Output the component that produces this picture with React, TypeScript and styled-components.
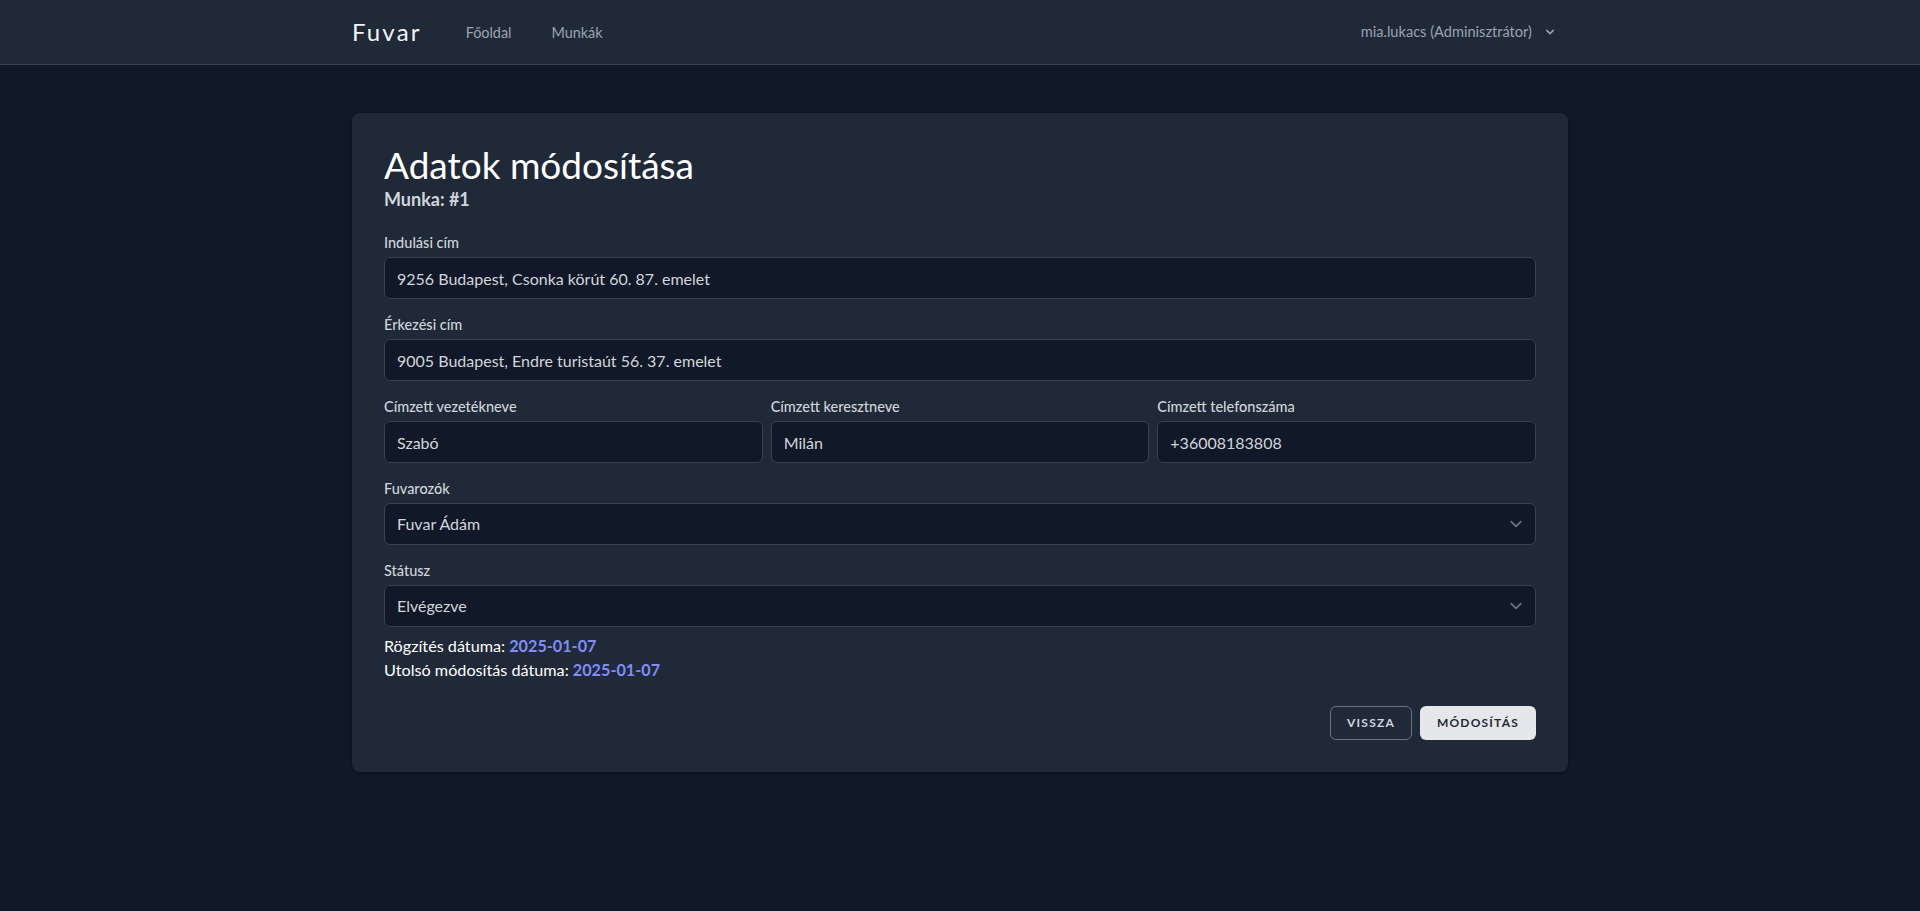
import React from "react";
import styled, { createGlobalStyle } from "styled-components";

const GlobalStyle = createGlobalStyle`
  * { box-sizing: border-box; }
  html, body { margin: 0; padding: 0; }
  body {
    background: #111827;
    font-family: Lato, "Noto Sans", "Liberation Sans", sans-serif;
    color: #d1d5db;
    -webkit-font-smoothing: antialiased;
  }
`;

const Page = styled.div`
  min-height: 100vh;
  background: #111827;
`;

const Nav = styled.nav`
  background: #1f2937;
  border-bottom: 1px solid #374151;
`;

const NavInner = styled.div`
  max-width: 1280px;
  margin: 0 auto;
  padding: 0 32px;
  height: 64px;
  display: flex;
  justify-content: space-between;
  align-items: stretch;
`;

const NavLeft = styled.div`
  display: flex;
  align-items: center;
`;

const Logo = styled.a`
  font-size: 24px;
  letter-spacing: 0.09em;
  color: #f3f4f6;
  text-decoration: none;
  line-height: 32px;
`;

const NavLinks = styled.div`
  display: flex;
  gap: 32px;
  margin-left: 40px;
  height: 100%;
`;

const NavLink = styled.a`
  display: inline-flex;
  align-items: center;
  padding: 4px 4px 0;
  border-bottom: 2px solid transparent;
  font-size: 14.4px;
  line-height: 20px;
  color: #9ca3af;
  text-decoration: none;
`;

const UserButton = styled.button`
  display: inline-flex;
  align-items: center;
  align-self: center;
  padding: 8px 9px 8px 12px;
  border: 1px solid transparent;
  border-radius: 6px;
  background: #1f2937;
  color: #9ca3af;
  font-family: inherit;
  font-size: 14.6px;
  line-height: 16px;
  cursor: pointer;
`;

const ChevronWrap = styled.span`
  display: inline-flex;
  margin-left: 10px;
  width: 16px;
  height: 16px;
`;

const Main = styled.main`
  padding: 48px 0;
`;

const Container = styled.div`
  max-width: 1280px;
  margin: 0 auto;
  padding: 0 32px;
`;

const Card = styled.section`
  background: #1f2937;
  border-radius: 8px;
  padding: 32px;
  box-shadow: 0 1px 3px rgba(0, 0, 0, 0.2), 0 1px 2px rgba(0, 0, 0, 0.15);
`;

const Title = styled.h1`
  margin: 0;
  font-size: 37px;
  line-height: 40px;
  font-weight: 400;
  color: #ffffff;
`;

const Subtitle = styled.h2`
  margin: 0;
  font-size: 18px;
  line-height: 28px;
  font-weight: 700;
  color: #d1d5db;
`;

const Form = styled.form`
  margin-top: 20px;
  display: flex;
  flex-direction: column;
  gap: 16px;
`;

const Row = styled.div<{ $cols: number }>`
  display: grid;
  grid-template-columns: repeat(${(p) => p.$cols}, 1fr);
  gap: 8px;
`;

const Field = styled.div`
  display: flex;
  flex-direction: column;
`;

const Label = styled.label`
  font-size: 14.5px;
  line-height: 20px;
  font-weight: 500;
  color: #d1d5db;
`;

const controlBase = `
  margin-top: 4px;
  width: 100%;
  height: 42px;
  padding: 8px 12px;
  background: #111827;
  border: 1px solid #374151;
  border-radius: 6px;
  color: #d1d5db;
  font-family: inherit;
  font-size: 16px;
  line-height: 24px;
  outline: none;
`;

const Input = styled.input`
  ${controlBase}
`;

const SelectWrap = styled.div`
  position: relative;
  margin-top: 4px;
`;

const Select = styled.select`
  ${controlBase}
  margin-top: 0;
  appearance: none;
  -webkit-appearance: none;
  padding-right: 40px;
`;

const SelectChevron = styled.svg`
  position: absolute;
  right: 8px;
  top: 50%;
  width: 24px;
  height: 24px;
  transform: translateY(-50%);
  pointer-events: none;
`;

const Meta = styled.div`
  margin-top: 7px;
  font-size: 16.2px;
  line-height: 24px;
  color: #ffffff;
`;

const MetaLine = styled.div``;

const DateValue = styled.span`
  color: #818cf8;
  font-weight: 700;
`;

const Actions = styled.div`
  margin-top: 24px;
  display: flex;
  justify-content: flex-end;
  gap: 8px;
`;

const Button = styled.button<{ $primary?: boolean }>`
  display: inline-flex;
  align-items: center;
  padding: 8px 16px;
  border-radius: 6px;
  border: 1px solid ${(p) => (p.$primary ? "transparent" : "#6b7280")};
  background: ${(p) => (p.$primary ? "#e5e7eb" : "#1f2937")};
  color: ${(p) => (p.$primary ? "#1f2937" : "#d1d5db")};
  font-family: inherit;
  font-size: 12px;
  line-height: 16px;
  font-weight: 700;
  letter-spacing: 0.1em;
  text-transform: uppercase;
  cursor: pointer;
`;

const Chevron = () => (
  <SelectChevron viewBox="0 0 20 20" fill="none">
    <path
      d="M6 8l4 4 4-4"
      stroke="#6b7280"
      strokeWidth="1.5"
      strokeLinecap="round"
      strokeLinejoin="round"
    />
  </SelectChevron>
);

export default function App() {
  return (
    <Page>
      <GlobalStyle />
      <Nav>
        <NavInner>
          <NavLeft>
            <Logo href="#">Fuvar</Logo>
            <NavLinks>
              <NavLink href="#">Főoldal</NavLink>
              <NavLink href="#">Munkák</NavLink>
            </NavLinks>
          </NavLeft>
          <UserButton type="button">
            mia.lukacs (Adminisztrátor)
            <ChevronWrap>
              <svg viewBox="0 0 20 20" width="16" height="16" fill="#9ca3af">
                <path
                  fillRule="evenodd"
                  clipRule="evenodd"
                  d="M5.293 7.293a1 1 0 011.414 0L10 10.586l3.293-3.293a1 1 0 111.414 1.414l-4 4a1 1 0 01-1.414 0l-4-4a1 1 0 010-1.414z"
                />
              </svg>
            </ChevronWrap>
          </UserButton>
        </NavInner>
      </Nav>

      <Main>
        <Container>
          <Card>
            <Title>Adatok módosítása</Title>
            <Subtitle>Munka: #1</Subtitle>

            <Form onSubmit={(e) => e.preventDefault()}>
              <Field>
                <Label htmlFor="from">Indulási cím</Label>
                <Input id="from" defaultValue="9256 Budapest, Csonka körút 60. 87. emelet" />
              </Field>
              <Field>
                <Label htmlFor="to">Érkezési cím</Label>
                <Input id="to" defaultValue="9005 Budapest, Endre turistaút 56. 37. emelet" />
              </Field>
              <Row $cols={3}>
                <Field>
                  <Label htmlFor="last">Címzett vezetékneve</Label>
                  <Input id="last" defaultValue="Szabó" />
                </Field>
                <Field>
                  <Label htmlFor="first">Címzett keresztneve</Label>
                  <Input id="first" defaultValue="Milán" />
                </Field>
                <Field>
                  <Label htmlFor="phone">Címzett telefonszáma</Label>
                  <Input id="phone" defaultValue="+36008183808" />
                </Field>
              </Row>
              <Field>
                <Label htmlFor="carrier">Fuvarozók</Label>
                <SelectWrap>
                  <Select id="carrier" defaultValue="1">
                    <option value="1">Fuvar Ádám</option>
                  </Select>
                  <Chevron />
                </SelectWrap>
              </Field>
              <Field>
                <Label htmlFor="status">Státusz</Label>
                <SelectWrap>
                  <Select id="status" defaultValue="done">
                    <option value="new">Kiosztva</option>
                    <option value="progress">Folyamatban</option>
                    <option value="done">Elvégezve</option>
                    <option value="failed">Sikertelen</option>
                  </Select>
                  <Chevron />
                </SelectWrap>
              </Field>
            </Form>

            <Meta>
              <MetaLine>
                Rögzítés dátuma: <DateValue>2025-01-07</DateValue>
              </MetaLine>
              <MetaLine>
                Utolsó módosítás dátuma: <DateValue>2025-01-07</DateValue>
              </MetaLine>
            </Meta>

            <Actions>
              <Button type="button">Vissza</Button>
              <Button type="button" $primary>
                Módosítás
              </Button>
            </Actions>
          </Card>
        </Container>
      </Main>
    </Page>
  );
}
